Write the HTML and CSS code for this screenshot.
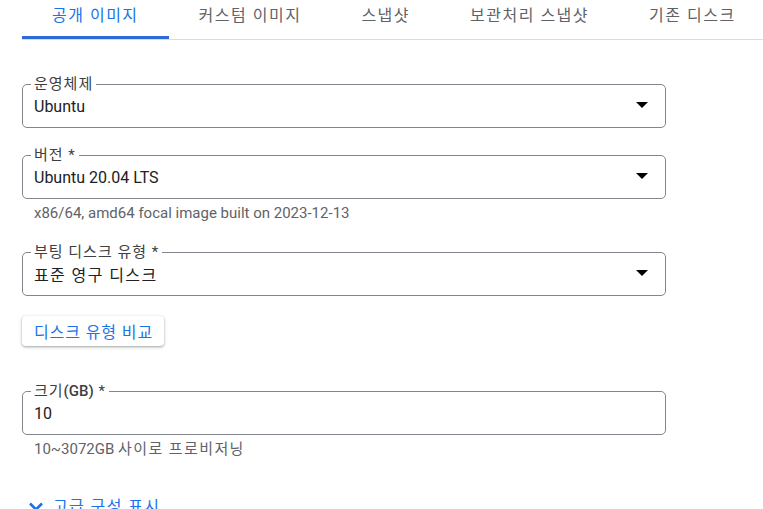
FILE: index.html
```html
<!DOCTYPE html>
<html lang="ko">
<head>
    <meta charset="UTF-8">
    <meta name="viewport" content="width=device-width, initial-scale=1.0">
    <title>부팅 디스크</title>
    <link rel="stylesheet" href="styles.css">
</head>
<body>
    <div id="container">
        <div class="tabs">
            <div class="tab active">공개 이미지</div>
            <div class="tab">커스텀 이미지</div>
            <div class="tab">스냅샷</div>
            <div class="tab">보관처리 스냅샷</div>
            <div class="tab">기존 디스크</div>
        </div>

        <div class="form">
            <fieldset class="field">
                <legend>운영체제</legend>
                <div class="value">
                    <span>Ubuntu</span>
                    <svg class="arrow" width="12" height="6" viewBox="0 0 12 6"><path d="M0 0h12L6 6z" fill="#000"/></svg>
                </div>
            </fieldset>

            <fieldset class="field">
                <legend>버전 *</legend>
                <div class="value">
                    <span>Ubuntu 20.04 LTS</span>
                    <svg class="arrow" width="12" height="6" viewBox="0 0 12 6"><path d="M0 0h12L6 6z" fill="#000"/></svg>
                </div>
            </fieldset>
            <p class="hint">x86/64, amd64 focal image built on 2023-12-13</p>

            <fieldset class="field spaced">
                <legend>부팅 디스크 유형 *</legend>
                <div class="value">
                    <span class="ko">표준 영구 디스크</span>
                    <svg class="arrow" width="12" height="6" viewBox="0 0 12 6"><path d="M0 0h12L6 6z" fill="#000"/></svg>
                </div>
            </fieldset>

            <button class="compare">디스크 유형 비교</button>

            <fieldset class="field size">
                <legend>크기<b>(GB)</b> *</legend>
                <div class="value">
                    <span>10</span>
                </div>
            </fieldset>
            <p class="hint">10~3072GB <span class="ko">사이로 프로비저닝</span></p>

            <div class="advanced">
                <svg width="20" height="20" viewBox="0 0 20 20"><path d="M4 6.5l6 6 6-6" fill="none" stroke="#1a73e8" stroke-width="2.6"/></svg>
                <span>고급 구성 표시</span>
            </div>
        </div>
    </div>
</body>
</html>
```

FILE: styles.css
```css
body {
    font-family: Roboto, "Noto Sans CJK KR", sans-serif;
    background-color: #fff;
    color: #202124;
    margin: 0;
    padding: 0;
    overflow: hidden;
}

#container {
    padding-left: 22px;
}

.tabs {
    display: flex;
    border-bottom: 1px solid #dadce0;
}

.tab {
    padding: 4px 30px 0;
    height: 32px;
    line-height: 24px;
    font-size: 16px;
    letter-spacing: 1.5px;
    color: #5f6368;
    border-bottom: 3px solid transparent;
    white-space: nowrap;
}

.tab.active {
    color: #1a73e8;
    border-bottom-color: #2f6ad9;
}

.form {
    width: 644px;
    padding-top: 36px;
}

.field {
    margin: 0;
    padding: 0 17px 9px 11px;
    min-width: 0;
    border: 1px solid #80868b;
    border-radius: 5px;
}

.field + .field {
    margin-top: 19px;
}

.field.spaced {
    margin-top: 21px;
}

.field.size {
    margin-top: 37px;
}

legend {
    margin-left: -3px;
    padding: 0 3px;
    font-size: 15px;
    line-height: 16px;
    letter-spacing: 1px;
    color: #3c4043;
}

legend b {
    font-weight: 500;
    letter-spacing: 0;
}

.value {
    display: flex;
    align-items: center;
    justify-content: space-between;
    margin-top: 2px;
    height: 24px;
    font-size: 16px;
    color: #202124;
}

.ko {
    letter-spacing: 1.4px;
}

.arrow {
    display: block;
    margin-top: -2px;
}

.hint {
    margin: 4px 0 0 12px;
    font-size: 15px;
    line-height: 20px;
    color: #5f6368;
}

.compare {
    display: block;
    margin-top: 20px;
    height: 30px;
    padding: 0 11px 0 12px;
    background-color: #fff;
    border: none;
    border-radius: 4px;
    box-shadow: 0 1px 2px rgba(60, 64, 67, 0.3), 0 1px 3px 1px rgba(60, 64, 67, 0.15);
    font-family: inherit;
    font-size: 16px;
    letter-spacing: 0.9px;
    color: #1a73e8;
}

.advanced {
    display: flex;
    align-items: center;
    gap: 7px;
    margin-top: 38px;
    margin-left: 4px;
    line-height: 20px;
    font-size: 16px;
    letter-spacing: 1.4px;
    color: #1a73e8;
}
```
